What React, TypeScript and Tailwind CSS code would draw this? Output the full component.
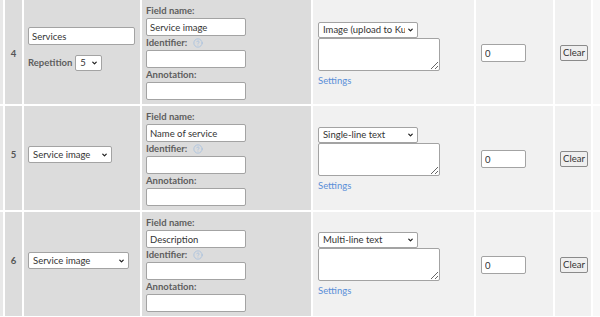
import { ChevronDown, CircleHelp } from "lucide-react";

interface FieldRow {
  num: number;
  fieldName: string;
  type: string;
  kind: "repeat" | "select";
  selectWidth?: string;
  numTop: string;
  leftTop: string;
  typeTop: string;
}

const rows: FieldRow[] = [
  { num: 4, fieldName: "Service image", type: "Image (upload to Kuroko)", kind: "repeat", numTop: "pt-[47px]", leftTop: "pt-[27px]", typeTop: "pt-[22px]" },
  { num: 5, fieldName: "Name of service", type: "Single-line text", kind: "select", selectWidth: "w-[84px]", numTop: "pt-[42px]", leftTop: "pt-[40px]", typeTop: "pt-[21px]" },
  { num: 6, fieldName: "Description", type: "Multi-line text", kind: "select", selectWidth: "w-[101px]", numTop: "pt-[42px]", leftTop: "pt-[40px]", typeTop: "pt-[20px]" },
];

const inputCls =
  "block h-[18px] border border-[#a3a3a3] rounded-[2px] bg-white px-[3px] text-[9.5px] text-[#333] outline-none";
const labelCls = "h-[14px] leading-[14px] text-[9.5px] font-bold text-[#5e5e5e]";

function Select({ value, width, height = "h-[17px]" }: { value: string; width: string; height?: string }) {
  return (
    <div className={`relative ${width} ${height}`}>
      <select
        className="block h-full w-full appearance-none overflow-hidden whitespace-nowrap border border-[#a3a3a3] rounded-[2px] bg-white pl-[4px] pr-[12px] text-[9.5px] leading-[14px] text-[#333] outline-none"
        defaultValue={value}
      >
        <option>{value}</option>
      </select>
      <ChevronDown
        className="pointer-events-none absolute right-[4px] top-1/2 size-[7px] -translate-y-1/2 text-[#222]"
        strokeWidth={4.5}
      />
    </div>
  );
}

function Row({ row }: { row: FieldRow }) {
  return (
    <div className="flex h-[104px] gap-[2px]">
      <div className="w-[3px] bg-[#e8e8e8]" />
      <div className={`w-[17px] bg-[#dcdcdc] text-center text-[9.5px] leading-[14px] font-bold text-[#555] ${row.numTop}`}>
        {row.num}
      </div>
      <div className={`w-[116px] bg-[#dcdcdc] px-[4px] ${row.leftTop}`}>
        {row.kind === "repeat" ? (
          <div className="flex flex-col gap-[10px]">
            <input className={`${inputCls} w-[107px] h-[17px]`} defaultValue="Services" readOnly />
            <div className="flex items-center gap-[3px]">
              <span className="text-[9.5px] font-bold text-[#5e5e5e]">Repetition</span>
              <Select value="5" width="w-[27px]" height="h-[16px]" />
            </div>
          </div>
        ) : (
          <Select value="Service image" width={row.selectWidth ?? "w-[84px]"} />
        )}
      </div>
      <div className="w-[169px] bg-[#dcdcdc] px-[4px] pt-[4px] flex flex-col">
        <div className={labelCls}>Field name:</div>
        <input className={`${inputCls} w-[100px]`} defaultValue={row.fieldName} readOnly />
        <div className={`${labelCls} flex items-center gap-[6px]`}>
          Identifier:
          <CircleHelp className="size-[10px] text-[#9dbbe0]" strokeWidth={1.6} />
        </div>
        <input className={`${inputCls} w-[100px]`} readOnly />
        <div className={labelCls}>Annotation:</div>
        <input className={`${inputCls} w-[100px]`} readOnly />
      </div>
      <div className={`w-[161px] bg-[#f1f1f1] px-[5px] flex flex-col ${row.typeTop}`}>
        <Select value={row.type} width="w-[100px]" height="h-[16px]" />
        <textarea className="block h-[33px] w-[122px] border border-[#a3a3a3] rounded-[2px] bg-white outline-none" readOnly />
        <a className="mt-[3px] text-[9.5px] leading-[14px] text-[#5a8fd8]">Settings</a>
      </div>
      <div className="w-[77px] bg-[#f1f1f1] px-[5px] pt-[44px]">
        <input className={`${inputCls} w-[45px]`} defaultValue="0" readOnly />
      </div>
      <div className="w-[36px] bg-[#f1f1f1] pl-[5px] pt-[45px]">
        <button className="block h-[16px] w-[28px] border border-[#8a8a8a] rounded-[2px] bg-[#efefef] p-0 text-[9.5px] leading-[14px] text-[#333]">
          Clear
        </button>
      </div>
      <div className="flex-1 bg-[#f8f8f8]" />
    </div>
  );
}

export default function App() {
  return (
    <div className="h-[317px] w-[600px] overflow-hidden bg-white font-['Lato',sans-serif]">
      <div className="flex flex-col gap-[2px]">
        {rows.map((row) => (
          <Row key={row.num} row={row} />
        ))}
      </div>
    </div>
  );
}
